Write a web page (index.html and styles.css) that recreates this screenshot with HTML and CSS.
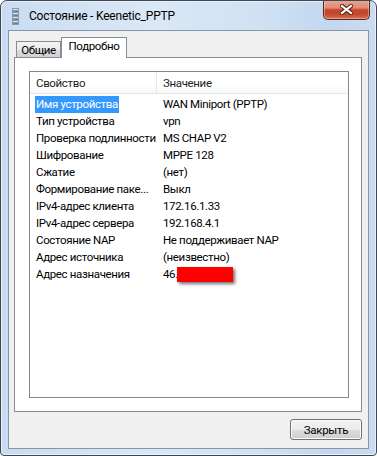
FILE: index.html
```html
<!DOCTYPE html>
<html lang="ru">
<head>
<meta charset="utf-8">
<title>Состояние - Keenetic_PPTP</title>
<link rel="stylesheet" href="styles.css">
</head>
<body>
<div class="window">
  <div class="titlebar">
    <svg class="app-icon" width="7" height="17" viewBox="0 0 7 17">
      <rect x="0" y="0" width="7" height="17" fill="#8e99a6"/>
      <rect x="1" y="1" width="5" height="1" fill="#d7e3ef"/>
      <rect x="1" y="3" width="5" height="1" fill="#5d86b8"/>
      <rect x="1" y="5" width="5" height="1" fill="#d7e3ef"/>
      <rect x="1" y="7" width="5" height="1" fill="#5d86b8"/>
      <rect x="1" y="9" width="5" height="1" fill="#d7e3ef"/>
      <rect x="1" y="11" width="5" height="1" fill="#5d86b8"/>
      <rect x="1" y="13" width="5" height="1" fill="#d7e3ef"/>
      <rect x="1" y="15" width="5" height="1" fill="#5d86b8"/>
    </svg>
    <span class="title">Состояние - Keenetic_PPTP</span>
    <div class="close">
      <svg width="13" height="11" viewBox="0 0 13 11">
        <path d="M2 2 L11 9 M11 2 L2 9" stroke="#5a2418" stroke-width="4.2" stroke-linecap="square"/>
        <path d="M2 2 L11 9 M11 2 L2 9" stroke="#ffffff" stroke-width="2.2" stroke-linecap="square"/>
      </svg>
    </div>
  </div>
  <div class="client">
    <div class="tabs">
      <div class="tab">Общие</div>
      <div class="tab active">Подробно</div>
    </div>
    <div class="panel">
      <div class="listview">
        <div class="lv-header">
          <div class="hcol hcol1">Свойство</div>
          <div class="hcol hcol2">Значение</div>
        </div>
        <div class="lv-body">
          <div class="row"><div class="c1"><span class="sel">Имя устройства</span></div><div class="c2">WAN Miniport (PPTP)</div></div>
          <div class="row"><div class="c1"><span>Тип устройства</span></div><div class="c2">vpn</div></div>
          <div class="row"><div class="c1"><span>Проверка подлинности</span></div><div class="c2">MS CHAP V2</div></div>
          <div class="row"><div class="c1"><span>Шифрование</span></div><div class="c2">MPPE 128</div></div>
          <div class="row"><div class="c1"><span>Сжатие</span></div><div class="c2">(нет)</div></div>
          <div class="row"><div class="c1"><span>Формирование паке...</span></div><div class="c2">Выкл</div></div>
          <div class="row"><div class="c1"><span>IPv4-адрес клиента</span></div><div class="c2">172.16.1.33</div></div>
          <div class="row"><div class="c1"><span>IPv4-адрес сервера</span></div><div class="c2">192.168.4.1</div></div>
          <div class="row"><div class="c1"><span>Состояние NAP</span></div><div class="c2">Не поддерживает NAP</div></div>
          <div class="row"><div class="c1"><span>Адрес источника</span></div><div class="c2">(неизвестно)</div></div>
          <div class="row"><div class="c1"><span>Адрес назначения</span></div><div class="c2">46.<span class="redact"></span></div></div>
        </div>
      </div>
    </div>
    <div class="footer">
      <button class="btn">Закрыть</button>
    </div>
  </div>
</div>
</body>
</html>
```

FILE: styles.css
```css
* { box-sizing: border-box; }
html, body { margin: 0; padding: 0; background: #ffffff; }
body {
  font-family: Roboto, "Noto Sans", "DejaVu Sans", sans-serif;
  font-size: 11.5px;
  letter-spacing: -0.35px;
  color: #000;
}
.window {
  width: 377px;
  height: 456px;
  border: 1px solid #3e4753;
  border-radius: 7px 7px 4px 4px;
  background: linear-gradient(90deg, #c9dcf1 0%, #dae8f6 40%, #d0e1f3 70%, #c2d7ee 88%, #cadcf1 100%);
  display: flex;
  flex-direction: column;
  overflow: hidden;
  box-shadow: inset 0 0 0 1px #e9f1fa;
}
.titlebar {
  height: 29px;
  flex: none;
  display: flex;
  align-items: flex-start;
}
.app-icon {
  margin: 7px 0 0 11px;
  flex: none;
}
.title {
  margin: 7px 0 0 10px;
  line-height: 16px;
  font-size: 12px;
  letter-spacing: -0.2px;
  color: #000;
}
.close {
  margin: -1px 6px 0 auto;
  width: 47px;
  height: 20px;
  border: 1px solid #5a2a20;
  border-top: none;
  border-radius: 0 0 5px 5px;
  background: linear-gradient(180deg, #eaa796 0%, #de8a74 42%, #c8452a 52%, #c24a2f 75%, #da7457 100%);
  box-shadow: inset 0 0 0 1px rgba(255, 210, 195, 0.45);
  display: flex;
  align-items: center;
  justify-content: center;
  flex: none;
}
.client {
  margin: 0 7px;
  height: 419px;
  flex: none;
  border: 1px solid #8596a9;
  background: #f0f0f0;
  padding: 6px 6px 8px 5px;
  display: flex;
  flex-direction: column;
}
.tabs {
  height: 20px;
  flex: none;
  display: flex;
  align-items: flex-end;
  padding-left: 2px;
}
.tab {
  height: 16px;
  border: 1px solid #898c95;
  border-bottom: none;
  background: linear-gradient(180deg, #f3f3f3 0%, #ebebeb 50%, #dcdcdc 51%, #d2d2d2 100%);
  line-height: 17px;
  width: 45px;
  text-align: center;
}
.tab.active {
  height: 21px;
  width: 66px;
  margin-bottom: -1px;
  background: #ffffff;
  position: relative;
  z-index: 1;
  line-height: 17px;
  text-align: center;
}
.panel {
  height: 355px;
  flex: none;
  border: 1px solid #898c95;
  background: #ffffff;
  padding: 13px 12px 13px 14px;
}
.listview {
  height: 327px;
  border: 1px solid #828790;
  background: #ffffff;
  display: flex;
  flex-direction: column;
}
.lv-header {
  height: 22px;
  flex: none;
  display: flex;
  border-bottom: 1px solid #e5e5e5;
  background: linear-gradient(180deg, #ffffff 0%, #ffffff 60%, #f7f8fa 100%);
}
.hcol {
  line-height: 22px;
  padding-left: 6px;
  color: #1e1e1e;
}
.hcol1 {
  width: 127px;
  flex: none;
  border-right: 1px solid #e3e8ee;
}
.hcol2 { flex: 1; }
.lv-body {
  padding-top: 2px;
}
.row {
  height: 17px;
  display: flex;
  line-height: 17px;
}
.c1 {
  width: 127px;
  flex: none;
  padding-left: 5px;
  white-space: nowrap;
}
.c1 span {
  padding: 0 1px;
  display: inline-block;
  height: 17px;
}
.c1 .sel {
  background: #3399ff;
  color: #ffffff;
}
.c2 {
  padding-left: 6px;
  white-space: nowrap;
  display: flex;
  align-items: center;
}
.redact {
  display: inline-block;
  width: 56px;
  height: 15px;
  background: #ff0000;
  box-shadow: 2px 2px 3px rgba(0, 0, 0, 0.55);
  margin-left: -1px;
}
.footer {
  flex: none;
  display: flex;
  justify-content: flex-end;
  padding-top: 7px;
}
.btn {
  width: 72px;
  height: 21px;
  border: 1px solid #707070;
  border-radius: 3px;
  background: linear-gradient(180deg, #f2f2f2 0%, #ebebeb 50%, #dddddd 51%, #cfcfcf 100%);
  box-shadow: inset 0 0 0 1px #fcfcfc;
  font-family: Roboto, "Noto Sans", "DejaVu Sans", sans-serif;
  font-size: 11.5px;
  letter-spacing: -0.3px;
  color: #000;
  padding: 0;
  line-height: 18px;
}
```
